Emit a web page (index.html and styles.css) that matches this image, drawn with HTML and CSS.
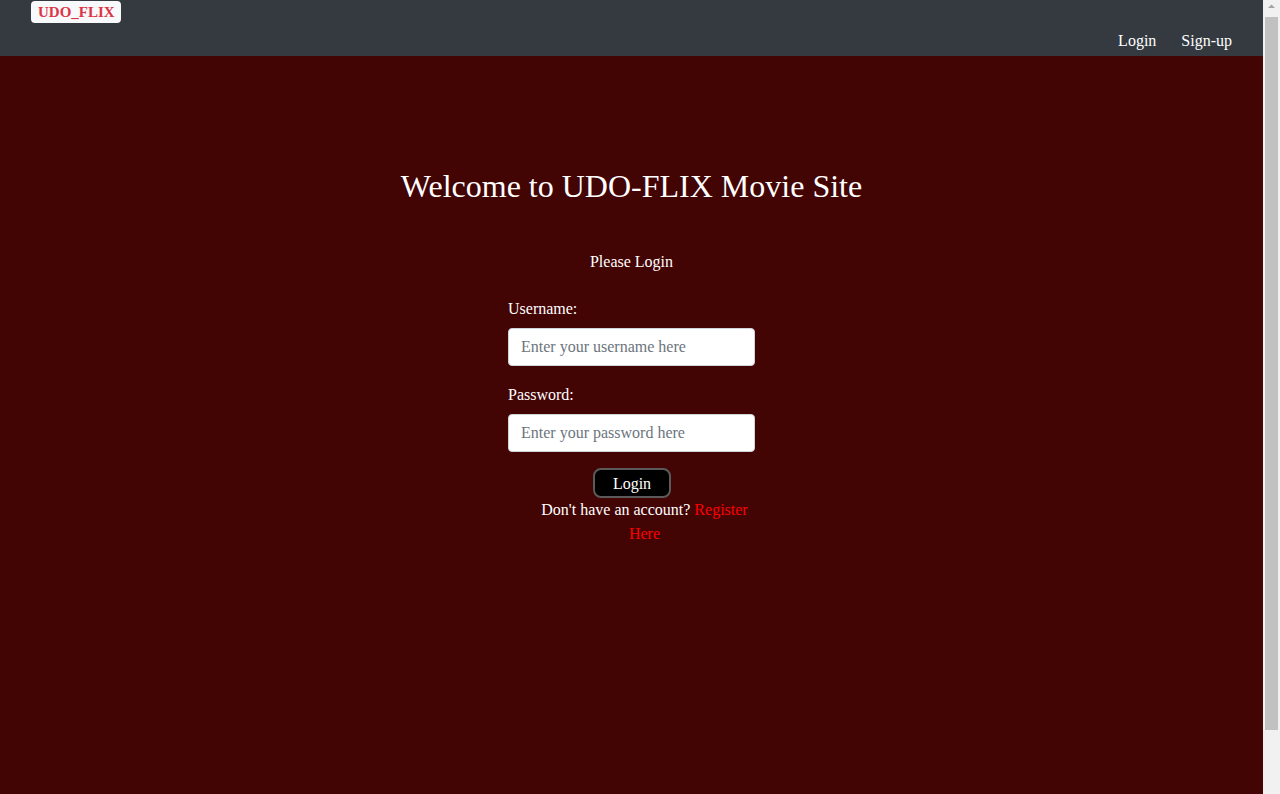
FILE: index.html
```html
<!DOCTYPE html>
<html lang="en">
<head>
<meta charset="utf-8">
<title>UDO-FLIX</title>
<link rel="stylesheet" href="styles.css">
</head>
<body>
<div class="page">
  <nav class="navbar">
    <div class="brand-row"><a class="brand" href="#">UDO_FLIX</a></div>
    <div class="nav-links">
      <a class="nav-link" href="#">Login</a>
      <a class="nav-link" href="#">Sign-up</a>
    </div>
  </nav>
  <main class="main">
    <h1 class="title">Welcome to UDO-FLIX Movie Site</h1>
    <p class="subtitle">Please Login</p>
    <form class="login-form">
      <label class="field-label" for="username">Username:</label>
      <input class="field-input" id="username" type="text" placeholder="Enter your username here">
      <label class="field-label" for="password">Password:</label>
      <input class="field-input" id="password" type="password" placeholder="Enter your password here">
      <button class="login-btn" type="button">Login</button>
      <p class="register">Don't have an account? <a class="register-link" href="#">Register</a> <a class="register-link" href="#">Here</a></p>
    </form>
  </main>
</div>
<div class="scrollbar" aria-hidden="true">
  <div class="scroll-arrow">
    <svg width="17" height="17" viewBox="0 0 17 17"><path d="M5 8h7L8.5 4.5z" fill="#a3a3a3"/></svg>
  </div>
  <div class="scroll-thumb"></div>
</div>
</body>
</html>
```
FILE: styles.css
```css
* { box-sizing: border-box; }
html, body { margin: 0; padding: 0; }
html { scrollbar-width: none; }
body {
  font-family: "Liberation Serif", "Times New Roman", serif;
  font-size: 16px;
  background: #430404;
  color: #fff;
  overflow-x: hidden;
}
.page {
  margin-right: 17px;
}
.scrollbar {
  position: fixed;
  top: 0;
  right: 0;
  width: 17px;
  height: 100vh;
  background: #f1f1f1;
  display: flex;
  flex-direction: column;
  align-items: center;
}
.scroll-arrow { height: 17px; width: 17px; }
.scroll-arrow svg { display: block; }
.scroll-thumb {
  width: 13px;
  height: 713px;
  background: #c1c1c1;
}
.navbar {
  background: #343a40;
  height: 56px;
  padding: 0 31px 0 31px;
  display: flex;
  flex-direction: column;
}
.brand-row { display: flex; padding-top: 1px; }
.brand {
  display: inline-block;
  background: #f8f9fa;
  color: #dc3545;
  font-weight: bold;
  font-size: 15px;
  text-decoration: none;
  height: 22px;
  line-height: 22px;
  padding: 0 6px 0 7px;
  border-radius: 4px;
}
.nav-links {
  display: flex;
  justify-content: flex-end;
  gap: 25px;
  margin-top: 7px;
}
.nav-link {
  color: #fff;
  text-decoration: none;
  line-height: 22px;
}
.main {
  min-height: 100vh;
  display: flex;
  flex-direction: column;
  align-items: center;
  padding-top: 110px;
}
.title {
  font-size: 32px;
  font-weight: normal;
  margin: 0;
  line-height: 40px;
}
.subtitle {
  margin: 45px 0 0;
  line-height: 22px;
}
.login-form {
  width: 247px;
  display: flex;
  flex-direction: column;
  margin-top: 25px;
}
.field-label {
  line-height: 22px;
}
.field-input {
  margin-top: 8px;
  margin-bottom: 18px;
  height: 38px;
  width: 247px;
  border: 1px solid #ced4da;
  border-radius: 4px;
  padding: 0 12px;
  font-family: "Liberation Serif", "Times New Roman", serif;
  font-size: 16px;
  color: #495057;
  background: #fff;
}
.field-input::placeholder { color: #6c757d; }
.field-input:last-of-type { margin-bottom: 0; }
.login-btn {
  align-self: center;
  margin-top: 16px;
  width: 78px;
  height: 30px;
  background: #000;
  color: #fff;
  border: 2px solid #5a5a5a;
  border-radius: 8px;
  font-family: "Liberation Serif", "Times New Roman", serif;
  font-size: 16px;
  padding: 2px 0 0;
  margin-left: 1px;
}
.register {
  margin: 0 0 0 24px;
  width: 225px;
  text-align: center;
  line-height: 24px;
}
.register-link { color: #ff0000; text-decoration: none; }
```
